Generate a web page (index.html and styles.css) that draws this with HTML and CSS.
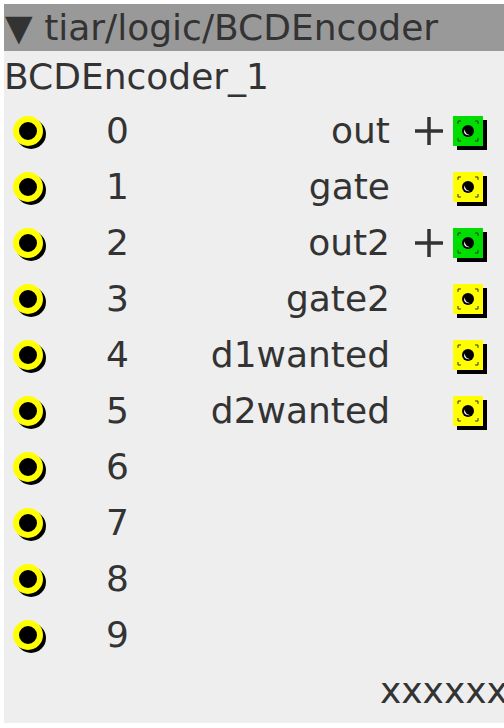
FILE: index.html
```html
<!DOCTYPE html>
<html lang="en">
<head>
  <meta charset="UTF-8" />
  <title>tiar/logic/BCDEncoder</title>
  <link rel="stylesheet" href="styles.css">
</head>
<body>
  <div class="object">
    <div class="title">▼ tiar/logic/BCDEncoder</div>
    <div class="instance">BCDEncoder_1</div>

    <div class="ports">
      <div class="inlets">
        <div class="inlet"><span class="jack-in"></span><span class="in-name">0</span></div>
        <div class="inlet"><span class="jack-in"></span><span class="in-name">1</span></div>
        <div class="inlet"><span class="jack-in"></span><span class="in-name">2</span></div>
        <div class="inlet"><span class="jack-in"></span><span class="in-name">3</span></div>
        <div class="inlet"><span class="jack-in"></span><span class="in-name">4</span></div>
        <div class="inlet"><span class="jack-in"></span><span class="in-name">5</span></div>
        <div class="inlet"><span class="jack-in"></span><span class="in-name">6</span></div>
        <div class="inlet"><span class="jack-in"></span><span class="in-name">7</span></div>
        <div class="inlet"><span class="jack-in"></span><span class="in-name">8</span></div>
        <div class="inlet"><span class="jack-in"></span><span class="in-name">9</span></div>
      </div>

      <div class="outlets">
        <div class="outlet">
          <span class="out-name">out</span>
          <span class="plus"><svg viewBox="0 0 36 36" width="36" height="36"><path d="M4 18H32M18 4V32" stroke="#333" stroke-width="3.5"/></svg></span>
          <span class="jack-out bool"><svg viewBox="0 0 30 30" width="30" height="30"><path d="M5 8V5H8M22 5H25V8M5 22V25H8M22 25H25V22" stroke="#333" stroke-width="1" fill="none"/><circle cx="15" cy="15" r="6" fill="#000"/><path d="M11 16A4.5 4.5 0 0 0 17 19A5 5 0 0 1 12 13Z" fill="#fff"/></svg></span>
        </div>
        <div class="outlet">
          <span class="out-name">gate</span>
          <span class="plus"></span>
          <span class="jack-out frac"><svg viewBox="0 0 30 30" width="30" height="30"><path d="M5 8V5H8M22 5H25V8M5 22V25H8M22 25H25V22" stroke="#333" stroke-width="1" fill="none"/><circle cx="15" cy="15" r="6" fill="#000"/><path d="M11 16A4.5 4.5 0 0 0 17 19A5 5 0 0 1 12 13Z" fill="#fff"/></svg></span>
        </div>
        <div class="outlet">
          <span class="out-name">out2</span>
          <span class="plus"><svg viewBox="0 0 36 36" width="36" height="36"><path d="M4 18H32M18 4V32" stroke="#333" stroke-width="3.5"/></svg></span>
          <span class="jack-out bool"><svg viewBox="0 0 30 30" width="30" height="30"><path d="M5 8V5H8M22 5H25V8M5 22V25H8M22 25H25V22" stroke="#333" stroke-width="1" fill="none"/><circle cx="15" cy="15" r="6" fill="#000"/><path d="M11 16A4.5 4.5 0 0 0 17 19A5 5 0 0 1 12 13Z" fill="#fff"/></svg></span>
        </div>
        <div class="outlet">
          <span class="out-name">gate2</span>
          <span class="plus"></span>
          <span class="jack-out frac"><svg viewBox="0 0 30 30" width="30" height="30"><path d="M5 8V5H8M22 5H25V8M5 22V25H8M22 25H25V22" stroke="#333" stroke-width="1" fill="none"/><circle cx="15" cy="15" r="6" fill="#000"/><path d="M11 16A4.5 4.5 0 0 0 17 19A5 5 0 0 1 12 13Z" fill="#fff"/></svg></span>
        </div>
        <div class="outlet">
          <span class="out-name">d1wanted</span>
          <span class="plus"></span>
          <span class="jack-out frac"><svg viewBox="0 0 30 30" width="30" height="30"><path d="M5 8V5H8M22 5H25V8M5 22V25H8M22 25H25V22" stroke="#333" stroke-width="1" fill="none"/><circle cx="15" cy="15" r="6" fill="#000"/><path d="M11 16A4.5 4.5 0 0 0 17 19A5 5 0 0 1 12 13Z" fill="#fff"/></svg></span>
        </div>
        <div class="outlet">
          <span class="out-name">d2wanted</span>
          <span class="plus"></span>
          <span class="jack-out frac"><svg viewBox="0 0 30 30" width="30" height="30"><path d="M5 8V5H8M22 5H25V8M5 22V25H8M22 25H25V22" stroke="#333" stroke-width="1" fill="none"/><circle cx="15" cy="15" r="6" fill="#000"/><path d="M11 16A4.5 4.5 0 0 0 17 19A5 5 0 0 1 12 13Z" fill="#fff"/></svg></span>
        </div>
      </div>
    </div>

    <div class="display">xxxxxxxx</div>
  </div>
</body>
</html>
```

FILE: styles.css
```css
html, body {
  margin: 0;
  background: #fff;
  overflow: hidden;
}
body {
  width: 504px;
  height: 728px;
}
.object {
  margin: 4px 0 0 4px;
  width: 620px;
  height: 719px;
  background: #eeeeee;
  color: #333;
  font-family: 'DejaVu Sans', sans-serif;
  font-size: 36px;
}
.title {
  background: #999999;
  height: 47px;
  line-height: 47px;
  padding-left: 1px;
  white-space: nowrap;
}
.instance {
  height: 52px;
  line-height: 52px;
  white-space: nowrap;
}
.ports {
  display: flex;
  width: 480px;
}
.inlets {
  display: flex;
  flex-direction: column;
}
.inlet {
  display: flex;
  align-items: center;
  height: 56px;
  line-height: 56px;
  padding-left: 9px;
}
.jack-in {
  width: 18px;
  height: 18px;
  border: 6px solid #ffff00;
  border-radius: 50%;
  background: #000;
  box-shadow: 3px 3px 0 #000;
}
.in-name {
  margin-left: 63px;
}
.outlets {
  margin-left: auto;
  display: flex;
  flex-direction: column;
}
.outlet {
  display: flex;
  align-items: center;
  justify-content: flex-end;
  height: 56px;
  line-height: 56px;
}
.out-name {
  margin-right: 21px;
}
.plus {
  width: 36px;
  height: 36px;
  margin-right: 6px;
}
.plus svg {
  display: block;
}
.jack-out {
  width: 30px;
  height: 30px;
  margin-right: 1px;
  box-shadow: 4px 4px 0 #000;
}
.jack-out svg {
  display: block;
}
.bool {
  background: #00dd00;
}
.frac {
  background: #ffff00;
}
.display {
  height: 56px;
  line-height: 56px;
  padding-left: 376px;
  white-space: nowrap;
}
```
